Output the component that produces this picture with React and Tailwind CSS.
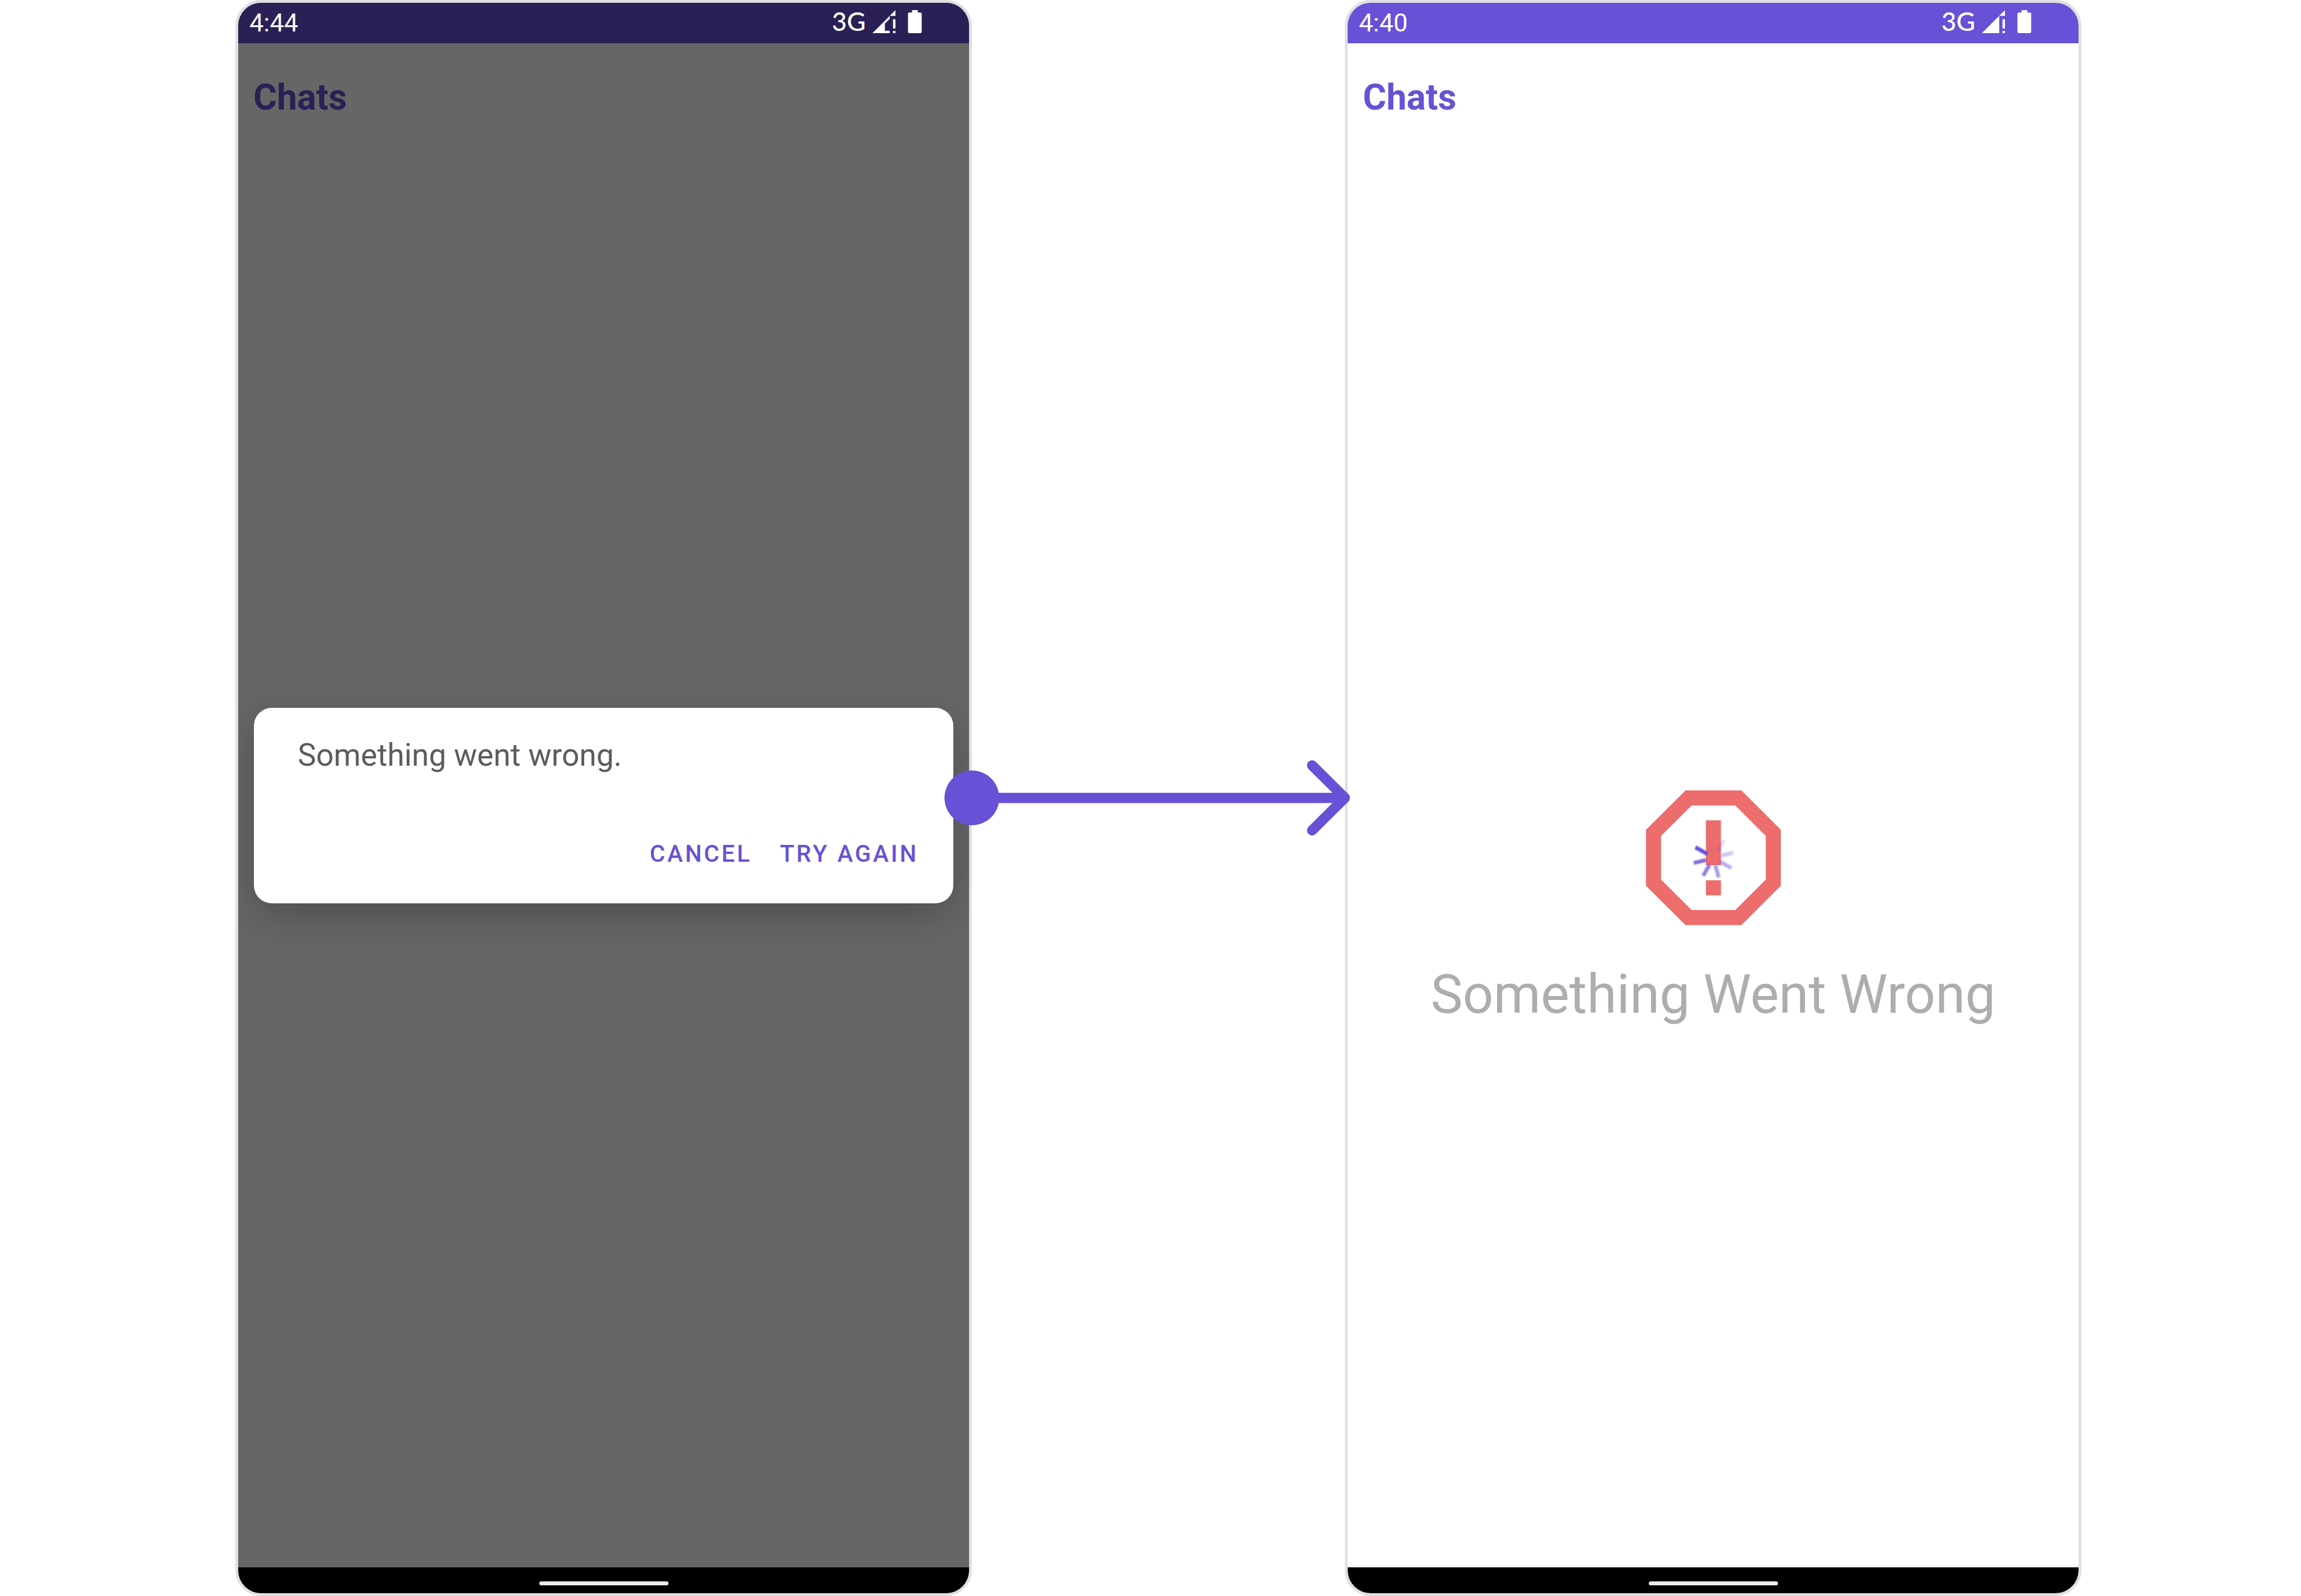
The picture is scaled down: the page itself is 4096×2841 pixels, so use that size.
import React from "react";

function SignalIcon({ weak }) {
  return (
    <svg className="w-[41px] h-[41px]" viewBox="376 58 133 133" fill="currentColor" aria-hidden="true">
      <path d="M509 58V91H476Z" />
      <path d={weak ? "M476 91V108L448 136V177H476V191H376Z" : "M476 91V191H376Z"} />
      <path d="M495 111H509V164H495ZM495 178H509V191H495Z" />
    </svg>
  );
}

function BatteryIcon() {
  return (
    <svg className="w-[25px] h-[41px]" viewBox="585 58 81 136" fill="currentColor" aria-hidden="true">
      <rect x="609" y="58" width="34" height="20" />
      <rect x="585" y="72" width="81" height="122" rx="9" />
    </svg>
  );
}

function ErrorIcon() {
  return (
    <svg className="w-60 h-60" viewBox="113 74 788 788" role="img" aria-label="Error">
      <path
        fill="#ed6c6c"
        fillRule="evenodd"
        d="M344 74H671L901 304V631L671 861H344L113 631V304ZM380 162L201 340V595L380 773H635L813 595V340L635 162Z"
      />
      <path fill="#ed6c6c" d="M463 249H551V511H463ZM463 599H551V687H463Z" />
      <defs>
        <filter id="soft" x="-20%" y="-20%" width="140%" height="140%">
          <feGaussianBlur stdDeviation="3" />
        </filter>
      </defs>
      <g stroke="#6851d6" strokeWidth="23" filter="url(#soft)">
        <path d="M402 406L472 446" />
        <path d="M392 498L464 481" opacity="0.82" />
        <path d="M485 508L447 573" opacity="0.72" />
        <path d="M518 511L538 582" opacity="0.55" />
        <path d="M545 490L612 528" opacity="0.45" />
        <path d="M553 456L622 438" opacity="0.3" />
        <path d="M532 429L568 365" opacity="0.2" />
        <path d="M497 424L480 358" opacity="0.06" />
      </g>
    </svg>
  );
}

function Phone({ time, dimmed, children }) {
  return (
    <section
      className={
        "relative flex flex-col overflow-hidden rounded-[46px] border-5 border-[#e0e0e0] " +
        (dimmed ? "bg-[#666666] text-[#2a2055]" : "bg-white text-[#6851d6]")
      }
    >
      <div
        className={
          "flex h-[72px] shrink-0 items-start justify-between pl-5 pr-[84px] pt-[13px] text-white " +
          (dimmed ? "bg-[#2a2055]" : "bg-[#6851d6]")
        }
      >
        <span className="text-[45px] leading-[46px]">{time}</span>
        <div className="flex items-start">
          <span className="mr-3 font-['Lato'] text-[46px] leading-[40px] font-medium">3G</span>
          <div className="flex gap-[22px]">
            <SignalIcon weak={dimmed} />
            <BatteryIcon />
          </div>
        </div>
      </div>
      <header className="px-[27px] pt-[59px]">
        <h1 className="text-[64px] leading-[76px] font-bold">Chats</h1>
      </header>
      <main className="flex-1">{children}</main>
      <div className="flex h-[46px] shrink-0 justify-center bg-black pt-[25px]">
        <div className="h-[7px] w-[230px] rounded-sm bg-[#ebebeb]" />
      </div>
    </section>
  );
}

function ErrorDialog() {
  return (
    <div className="absolute inset-x-0 top-[72px] bottom-[46px] flex items-center px-7">
      <div
        role="alertdialog"
        aria-labelledby="dialog-message"
        className="w-full rounded-[32px] bg-white pt-[52px] pr-[62px] pb-[54px] pl-[78px] shadow-[0_22px_70px_rgba(0,0,0,0.22)]"
      >
        <p id="dialog-message" className="text-[55px] leading-[64px] text-[#5c5c5c]">
          Something went wrong.
        </p>
        <div className="mt-[110px] flex justify-end gap-[50px] text-[42px] leading-[68px] font-medium tracking-[0.09em] text-[#6851d6]">
          <button type="button">CANCEL</button>
          <button type="button">TRY AGAIN</button>
        </div>
      </div>
    </div>
  );
}

function Arrow() {
  return (
    <svg
      className="relative z-10 w-full self-center overflow-visible"
      viewBox="0 0 729 128"
      fill="none"
      stroke="#6851d6"
      strokeWidth="20"
      strokeLinecap="round"
      strokeLinejoin="round"
      aria-hidden="true"
    >
      <circle cx="0" cy="64" r="53.5" fill="#6851d6" stroke="none" />
      <path d="M0 64H729M665 0.5L729 64L665 127.5" />
    </svg>
  );
}

export default function App() {
  return (
    <div className="grid min-h-screen grid-cols-[419fr_1311fr_664fr_1311fr_391fr] bg-white font-['Roboto',sans-serif]">
      <div />
      <Phone time="4:44" dimmed>
        <ErrorDialog />
      </Phone>
      <Arrow />
      <Phone time="4:40">
        <div className="flex flex-col items-center pt-[1195px]">
          <ErrorIcon />
          <p className="mt-[67px] text-[96px] leading-[112px] text-[#adadad]">Something Went Wrong</p>
        </div>
      </Phone>
      <div />
    </div>
  );
}
